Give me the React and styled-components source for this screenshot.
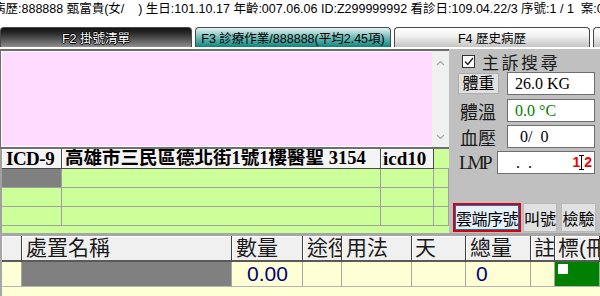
import React from 'react';
import styled, { createGlobalStyle } from 'styled-components';

const SANS = `"Liberation Sans", "Noto Sans CJK TC", sans-serif`;
const SERIF = `"Liberation Serif", "Noto Sans CJK TC", serif`;

const GlobalStyle = createGlobalStyle`
  html, body {
    margin: 0;
    padding: 0;
    background: #fff;
  }
  body {
    font-family: ${SANS};
  }
  * {
    box-sizing: border-box;
  }
`;

const Screen = styled.div`
  width: 600px;
  height: 296px;
  overflow: hidden;
  background: #fff;
  display: flex;
  flex-direction: column;
`;

const InfoBar = styled.div`
  height: 21px;
  flex: none;
  line-height: 19px;
  font-size: 12.5px;
  white-space: nowrap;
  overflow: hidden;
  color: #000;
  text-indent: -7px;
`;

const TabBar = styled.div`
  height: 28px;
  flex: none;
  display: flex;
  align-items: flex-start;
  gap: 3px;
  padding-top: 6px;
  background: #fff;
  overflow: hidden;
`;

const tabBg = {
  dark: 'linear-gradient(#111, #2e2e2e 30%, #8e8e8e)',
  teal: 'linear-gradient(#e6f3f2, #7cc0bc 45%, #0b857f)',
  light: 'linear-gradient(#ffffff, #f2f2f2 40%, #c4c4c4)',
};

const Tab = styled.div`
  flex: none;
  width: ${p => p.$w}px;
  height: 20px;
  border: 1px solid #4a4a4a;
  border-bottom: none;
  border-radius: 4px 4px 0 0;
  background: ${p => tabBg[p.$kind]};
  display: flex;
  align-items: center;
  justify-content: center;
  font-size: 12.5px;
  white-space: nowrap;
  color: ${p => (p.$kind === 'dark' ? '#fff' : '#000')};
  text-shadow: ${p =>
    p.$kind === 'dark'
      ? '-1px 0 #000, 1px 0 #000, 0 -1px #000, 0 1px #000'
      : 'none'};
`;

const Main = styled.div`
  height: 184px;
  flex: none;
  display: flex;
`;

const LeftPanel = styled.div`
  width: 449px;
  flex: none;
  display: flex;
  flex-direction: column;
`;

const Memo = styled.div`
  height: 100px;
  flex: none;
  display: flex;
  border-top: 2px solid #6e6e6e;
  border-bottom: 2px solid #6e6e6e;
  border-left: 1px solid #6e6e6e;
`;

const MemoText = styled.div`
  flex: 1;
  background: #ffdcff;
  border: 1px solid #fff;
  border-right: none;
`;

const ScrollBar = styled.div`
  width: 17px;
  flex: none;
  background: #f0f0f0;
  display: flex;
  flex-direction: column;
  justify-content: space-between;
  align-items: center;
  padding: 9px 0 7px;
`;

const DiagGrid = styled.div`
  flex: 1;
  display: grid;
  grid-template-columns: 60px 319px 53px 1fr;
  grid-template-rows: 20px 19px 19px 19px 1fr;
  background: #ccff99;
  border-left: 2px solid #a0a0a0;
  overflow: hidden;
`;

const DiagHead = styled.div`
  background: #f4f4f4;
  border-right: 1px solid #4a4a4a;
  border-bottom: 1px solid #4a4a4a;
  box-shadow: inset 1px 1px 0 #fff;
  font-family: ${SERIF};
  font-weight: bold;
  font-size: ${p => p.$size || 19}px;
  line-height: 19px;
  padding-left: ${p => p.$pad || 4}px;
  letter-spacing: ${p => p.$ls || 0}px;
  white-space: nowrap;
  overflow: hidden;
  color: #000;
`;

const DiagBlank = styled.div`
  border-bottom: 1px solid #a0a0a0;
`;

const DiagCell = styled.div`
  background: ${p => (p.$sel ? '#808080' : '#ccff99')};
  border-right: 1px solid #a0a0a0;
  border-bottom: 1px solid #a0a0a0;
`;

const RightPanel = styled.div`
  flex: 1;
  background: #c0c0c0;
  display: flex;
  flex-direction: column;
  padding: 3px 0 1px;
`;

const CheckRow = styled.label`
  display: flex;
  align-items: center;
  height: 18px;
  padding-left: 13px;
  gap: 7px;
  font-size: 17px;
  letter-spacing: 2.5px;
  color: #1a1a1a;
  margin-bottom: 2px;
`;

const CheckBox = styled.span`
  width: 13px;
  height: 13px;
  border: 1px solid #333;
  background: #fff;
  display: flex;
  align-items: center;
  justify-content: center;
`;

const Fields = styled.div`
  display: flex;
  flex-direction: column;
  gap: 3px;
`;

const FieldRow = styled.div`
  height: 23px;
  display: flex;
  align-items: center;
  padding-left: ${p => p.$pad}px;
  gap: ${p => p.$gap}px;
  margin-bottom: ${p => p.$mb || 0}px;
`;

const LabelButton = styled.div`
  width: 41px;
  height: 21px;
  background: #e1e1e1;
  border: 1px solid #adadad;
  font-size: 16px;
  line-height: 19px;
  text-align: center;
  color: #000;
`;

const Label = styled.div`
  width: ${p => p.$w}px;
  font-family: ${p => (p.$serif ? SERIF : SANS)};
  font-size: ${p => p.$size || 18}px;
  letter-spacing: ${p => p.$ls || 0}px;
  color: #1a1a1a;
  white-space: nowrap;
`;

const Field = styled.div`
  width: ${p => p.$w}px;
  height: 23px;
  background: #fff;
  border: 1px solid #6e6e6e;
  font-family: ${SERIF};
  font-size: 16px;
  line-height: 21px;
  padding-left: ${p => p.$pad || 7}px;
  color: ${p => p.$color || '#000'};
  white-space: pre;
  display: flex;
  align-items: center;
  justify-content: space-between;
`;

const RedNum = styled.span`
  font-family: ${SANS};
  font-weight: bold;
  font-size: 14px;
  color: #f00000;
  display: flex;
  align-items: center;
  padding-right: 2px;
`;

const IBeam = styled.span`
  width: 5px;
  height: 15px;
  border-top: 1px solid #000;
  border-bottom: 1px solid #000;
  display: flex;
  justify-content: center;
  margin: 0 0 0 -1px;
  &::after {
    content: '';
    width: 1px;
    background: #000;
  }
`;

const ButtonRow = styled.div`
  margin-top: auto;
  display: flex;
  align-items: flex-end;
  padding-left: 4px;
`;

const ActionButton = styled.div`
  width: ${p => p.$w}px;
  height: 29px;
  margin-left: ${p => p.$ml || 0}px;
  background: ${p => (p.$active ? '#e5f1fb' : '#e1e1e1')};
  border: ${p => (p.$active ? '2px solid #e00000' : '1px solid #b8b8b8')};
  box-shadow: ${p => (p.$active ? 'inset 0 0 0 1px #0078d7' : 'none')};
  font-size: 16px;
  letter-spacing: ${p => (p.$active ? -0.5 : 0)}px;
  color: #000;
  display: flex;
  align-items: center;
  justify-content: center;
  white-space: nowrap;
  overflow: hidden;
`;

const OrderTable = styled.div`
  flex: 1;
  display: grid;
  grid-template-columns: 20px 210px 71px 39px 70px 54px 65px 24px 1fr;
  grid-template-rows: 26px 25px 1fr;
  background: #ffffd5;
  border-top: 3px solid #a6a6a6;
  border-left: 2px solid #a6a6a6;
`;

const OrderHead = styled.div`
  background: #f0f0f0;
  border-right: 1px solid #404040;
  border-bottom: 2px solid #5a5a5a;
  box-shadow: inset 1px 1px 0 #fff;
  font-size: 21px;
  line-height: 24px;
  padding-left: ${p => p.$pad || 4}px;
  color: #1a1a1a;
  white-space: nowrap;
  overflow: hidden;
`;

const OrderCell = styled.div`
  background: ${p => p.$bg || '#ffffd5'};
  border-right: 1px solid #a6a6a6;
  border-bottom: 1px solid #b4b4b4;
  font-family: ${SANS};
  font-size: 21px;
  line-height: 24px;
  color: #000080;
  padding-left: ${p => p.$pad || 0}px;
  padding-top: ${p => p.$pt || 0}px;
`;

const Flag = styled.div`
  width: 10px;
  height: 10px;
  background: #fff;
`;

const Chevron = ({ up }) => (
  <svg width="9" height="6" viewBox="0 0 9 6">
    <polyline
      points={up ? '1,5 4.5,1.5 8,5' : '1,1 4.5,4.5 8,1'}
      fill="none"
      stroke="#a8a8a8"
      strokeWidth="1.2"
    />
  </svg>
);

const orderHeads = ['', '處置名稱', '數量', '途徑', '用法', '天', '總量', '註', '標(冊'];

export default function App() {
  return (
    <Screen>
      <GlobalStyle />
      <InfoBar>
        病歷:888888 甄富貴(女/&nbsp;&nbsp;&nbsp;&nbsp;) 生日:101.10.17 年齡:007.06.06 ID:Z299999992 看診日:109.04.22/3 序號:1 / 1&nbsp;&nbsp;案:01
      </InfoBar>
      <TabBar>
        <Tab $w={192} $kind="dark">F2 掛號清單</Tab>
        <Tab $w={196} $kind="teal">F3 診療作業/888888(平均2.45項)</Tab>
        <Tab $w={196} $kind="light">F4 歷史病歷</Tab>
        <Tab $w={40} $kind="light" />
      </TabBar>
      <Main>
        <LeftPanel>
          <Memo>
            <MemoText />
            <ScrollBar>
              <Chevron up />
              <Chevron />
            </ScrollBar>
          </Memo>
          <DiagGrid>
            <DiagHead $ls={-0.5}>ICD-9</DiagHead>
            <DiagHead $pad={3} $size={18.5}>高雄市三民區德北街1號1樓醫聖 3154</DiagHead>
            <DiagHead $pad={2}>icd10</DiagHead>
            <DiagBlank />
            {[0, 1, 2].map(r => (
              <React.Fragment key={r}>
                <DiagCell $sel={r === 0} />
                <DiagCell />
                <DiagCell />
                <DiagCell />
              </React.Fragment>
            ))}
          </DiagGrid>
        </LeftPanel>
        <RightPanel>
          <CheckRow>
            <CheckBox>
              <svg width="10" height="9" viewBox="0 0 10 9">
                <polyline points="1,4.5 3.8,7.5 9,1" fill="none" stroke="#222" strokeWidth="1.4" />
              </svg>
            </CheckBox>
            主訴搜尋
          </CheckRow>
          <Fields>
            <FieldRow $pad={9} $gap={8} $mb={1}>
              <LabelButton>體重</LabelButton>
              <Field $w={88}>26.0 KG</Field>
            </FieldRow>
            <FieldRow $pad={11} $gap={10}>
              <Label $w={37}>體溫</Label>
              <Field $w={88} $color="#008000">0.0 °C</Field>
            </FieldRow>
            <FieldRow $pad={11} $gap={10}>
              <Label $w={37}>血壓</Label>
              <Field $w={88} $pad={12}>0/  0</Field>
            </FieldRow>
            <FieldRow $pad={10} $gap={8}>
              <Label $w={30} $serif $size={19} $ls={-2.8}>LMP</Label>
              <Field $w={98} $pad={18}>
                <span>.  .</span>
                <RedNum>
                  1<IBeam />2
                </RedNum>
              </Field>
            </FieldRow>
          </Fields>
          <ButtonRow>
            <ActionButton $w={68} $active>雲端序號</ActionButton>
            <ActionButton $w={34} $ml={2}>叫號</ActionButton>
            <ActionButton $w={35} $ml={4}>檢驗</ActionButton>
          </ButtonRow>
        </RightPanel>
      </Main>
      <OrderTable>
        {orderHeads.map((h, i) => (
          <OrderHead key={i} $pad={i === 5 || i >= 7 ? 3 : 4}>{h}</OrderHead>
        ))}
        <OrderCell />
        <OrderCell $bg="#808080" />
        <OrderCell $pad={15}>0.00</OrderCell>
        <OrderCell />
        <OrderCell />
        <OrderCell />
        <OrderCell $pad={10}>0</OrderCell>
        <OrderCell />
        <OrderCell $bg="#008000" $pad={3} $pt={2}>
          <Flag />
        </OrderCell>
      </OrderTable>
    </Screen>
  );
}
